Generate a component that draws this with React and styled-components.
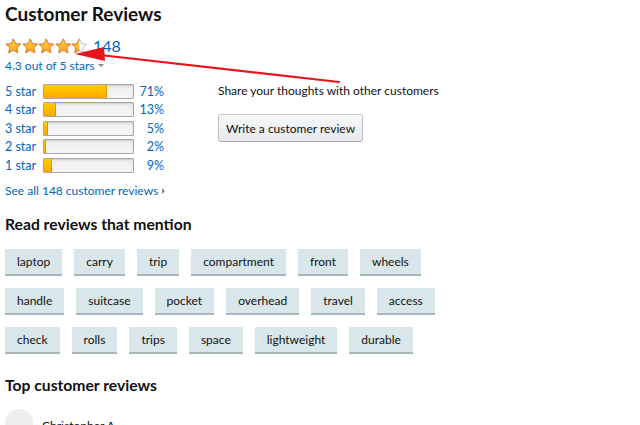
import React from "react";
import styled, { createGlobalStyle } from "styled-components";

const Global = createGlobalStyle`
  html, body { margin: 0; padding: 0; background: #fff; }
  body { font-family: Lato, "Noto Sans", Arial, sans-serif; color: #111; overflow: hidden; }
`;

const Page = styled.div`
  position: relative;
  width: 640px;
  height: 425px;
  padding: 0 5px;
  box-sizing: border-box;
  overflow: hidden;
`;

const Title = styled.h2`
  margin: 0;
  padding-top: 2px;
  font-size: 19px;
  line-height: 24px;
  font-weight: 700;
`;

const Top = styled.div`
  display: flex;
  align-items: flex-start;
`;

const LeftCol = styled.div`
  width: 213px;
  flex: none;
`;

const RightCol = styled.div`
  padding-top: 56px;
`;

const StarsRow = styled.div`
  display: flex;
  align-items: center;
  gap: 5px;
  margin-top: 10px;
  height: 20px;
`;

const Stars = styled.div`
  display: flex;
`;

const Count = styled.a`
  color: #0066c0;
  font-size: 16px;
  line-height: 20px;
  text-decoration: none;
`;

const Link = styled.a`
  display: inline-flex;
  align-items: center;
  gap: 4px;
  color: #0066c0;
  font-size: 12px;
  text-decoration: none;
`;

const OutOf = styled.div`
  margin-top: -1px;
  height: 18px;
  line-height: 18px;
`;

const Caret = styled.span`
  display: inline-block;
  width: 0;
  height: 0;
  border-left: ${(p) => (p.right ? "3px solid #888" : "3px solid transparent")};
  border-right: 3px solid transparent;
  border-top: ${(p) => (p.right ? "3px solid transparent" : "3px solid #888")};
  border-bottom: ${(p) => (p.right ? "3px solid transparent" : "0")};
  margin-top: ${(p) => (p.right ? "0" : "-2px")};
`;

const Histogram = styled.div`
  margin-top: 9px;
  display: flex;
  flex-direction: column;
`;

const HistRow = styled.div`
  display: grid;
  grid-template-columns: 38px 91px 30px;
  align-items: center;
  height: 18.5px;
`;

const StarLabel = styled.a`
  color: #0066c0;
  font-size: 12.5px;
  text-decoration: none;
  white-space: nowrap;
`;

const Bar = styled.div`
  height: 15px;
  box-sizing: border-box;
  border: 1px solid #a8a8a8;
  border-radius: 1px;
  background: linear-gradient(#eeeeee, #f6f6f6);
  box-shadow: inset 0 1px 2px rgba(0, 0, 0, 0.15);
  overflow: hidden;
`;

const Fill = styled.div`
  height: 100%;
  box-sizing: border-box;
  background: linear-gradient(#ffce00, #ffa700);
  border-right: 1px solid #d99a00;
`;

const Pct = styled.a`
  color: #0066c0;
  font-size: 12.5px;
  text-align: right;
  text-decoration: none;
`;

const SeeAll = styled.div`
  margin-top: 5px;
  height: 18px;
  line-height: 18px;
`;

const ShareText = styled.div`
  font-size: 12px;
  line-height: 18px;
  color: #111;
`;

const Button = styled.button`
  margin-top: 14px;
  height: 28px;
  padding: 0 7px;
  font-family: inherit;
  font-size: 12px;
  color: #111;
  border: 1px solid #adb1b8;
  border-color: #c6c7c9 #bcbdc0 #a9abae;
  border-radius: 3px;
  background: linear-gradient(#f7f8fa, #e7e9ec);
  box-shadow: 0 1px 0 rgba(255, 255, 255, 0.6) inset;
`;

const Heading = styled.h3`
  margin: 0;
  font-size: 15.7px;
  line-height: 22px;
  font-weight: 700;
`;

const MentionHeading = styled(Heading)`
  margin-top: 15px;
`;

const TopHeading = styled(Heading)`
  margin-top: 20px;
`;

const Tags = styled.div`
  margin-top: 14px;
  display: flex;
  flex-direction: column;
  gap: 12px;
`;

const TagRow = styled.div`
  display: flex;
  gap: 12px;
`;

const Tag = styled.span`
  display: inline-flex;
  align-items: center;
  height: 27px;
  box-sizing: border-box;
  padding: 0 12px;
  background: #d9e7ea;
  border-bottom: 2px solid #a9b7ba;
  font-size: 12px;
  color: #111;
  white-space: nowrap;
`;

const Reviewer = styled.div`
  margin-top: 13px;
  display: flex;
  align-items: flex-start;
  gap: 9px;
`;

const Avatar = styled.div`
  width: 28px;
  height: 28px;
  border-radius: 50%;
  background: #eeeeee;
  flex: none;
`;

const Name = styled.div`
  font-size: 12px;
  line-height: 18px;
  padding-top: 8px;
`;

const Annotation = styled.svg`
  position: absolute;
  left: 0;
  top: 0;
  pointer-events: none;
`;

const STAR_PATH =
  "M8 0.9 L10.1 5.5 L15.1 6 L11.3 9.3 L12.4 14.3 L8 11.7 L3.6 14.3 L4.7 9.3 L0.9 6 L5.9 5.5 Z";

function Star({ fill, id }) {
  return (
    <svg width="16.6" height="16.6" viewBox="0 0 16 16">
      <defs>
        <linearGradient id={`g${id}`} x1="0" y1="0" x2="0" y2="1">
          <stop offset="0" stopColor="#ffd24c" />
          <stop offset="1" stopColor="#ffa41c" />
        </linearGradient>
        <clipPath id={`c${id}`}>
          <rect x="0" y="0" width={16 * fill} height="16" />
        </clipPath>
      </defs>
      <path d={STAR_PATH} fill="#fff" stroke="#b8b8b8" strokeWidth="0.9" strokeLinejoin="round" />
      <g clipPath={`url(#c${id})`}>
        <path d={STAR_PATH} fill={`url(#g${id})`} stroke="#de7921" strokeWidth="0.9" strokeLinejoin="round" />
      </g>
    </svg>
  );
}

const hist = [
  ["5 star", 71],
  ["4 star", 13],
  ["3 star", 5],
  ["2 star", 2],
  ["1 star", 9],
];

const tagRows = [
  ["laptop", "carry", "trip", "compartment", "front", "wheels"],
  ["handle", "suitcase", "pocket", "overhead", "travel", "access"],
  ["check", "rolls", "trips", "space", "lightweight", "durable"],
];

export default function App() {
  return (
    <>
      <Global />
      <Page>
        <Title>Customer Reviews</Title>
        <Top>
          <LeftCol>
            <StarsRow>
              <Stars>
                {[1, 1, 1, 1, 0.5].map((f, i) => (
                  <Star key={i} fill={f} id={i} />
                ))}
              </Stars>
              <Count href="#">148</Count>
            </StarsRow>
            <OutOf>
              <Link href="#">
                4.3 out of 5 stars <Caret />
              </Link>
            </OutOf>
            <Histogram>
              {hist.map(([label, pct]) => (
                <HistRow key={label}>
                  <StarLabel href="#">{label}</StarLabel>
                  <Bar>
                    <Fill style={{ width: `${pct}%` }} />
                  </Bar>
                  <Pct href="#">{pct}%</Pct>
                </HistRow>
              ))}
            </Histogram>
            <SeeAll>
              <Link href="#">
                See all 148 customer reviews <Caret right />
              </Link>
            </SeeAll>
          </LeftCol>
          <RightCol>
            <ShareText>Share your thoughts with other customers</ShareText>
            <Button>Write a customer review</Button>
          </RightCol>
        </Top>
        <MentionHeading>Read reviews that mention</MentionHeading>
        <Tags>
          {tagRows.map((row, i) => (
            <TagRow key={i}>
              {row.map((t) => (
                <Tag key={t}>{t}</Tag>
              ))}
            </TagRow>
          ))}
        </Tags>
        <TopHeading>Top customer reviews</TopHeading>
        <Reviewer>
          <Avatar />
          <Name>Christopher A.</Name>
        </Reviewer>
        <Annotation width="640" height="425" viewBox="0 0 640 425">
          <line x1="100" y1="55" x2="339" y2="82" stroke="#e8141b" strokeWidth="2.2" strokeLinecap="round" />
          <polygon points="75,54 104,47 105,61" fill="#e8141b" />
        </Annotation>
      </Page>
    </>
  );
}
